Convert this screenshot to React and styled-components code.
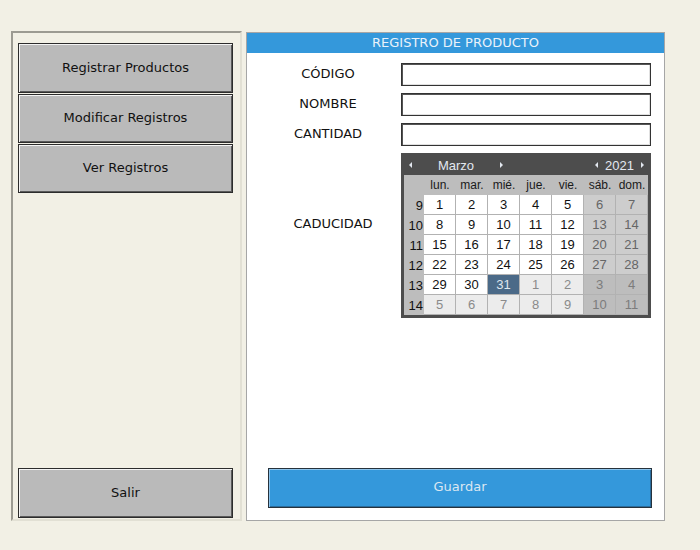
import React from "react";
import styled, { createGlobalStyle } from "styled-components";

const GlobalStyle = createGlobalStyle`
  html, body {
    margin: 0;
    padding: 0;
    background: #f2f0e5;
    font-family: "DejaVu Sans", sans-serif;
  }
`;

const Screen = styled.div`
  width: 700px;
  height: 550px;
  box-sizing: border-box;
  padding: 31px 0 0 11px;
  display: flex;
  align-items: flex-start;
  gap: 4px;
`;

const SideFrame = styled.div`
  box-sizing: border-box;
  width: 231px;
  height: 490px;
  border: 2px solid;
  border-color: #9c9b92 #e2e0d4 #e2e0d4 #9c9b92;
  padding: 10px 7px 1px 5px;
  display: flex;
  flex-direction: column;
  justify-content: space-between;
`;

const MenuGroup = styled.div`
  display: flex;
  flex-direction: column;
  gap: 1px;
`;

const MenuButton = styled.button`
  box-sizing: border-box;
  width: 215px;
  height: ${(p) => (p.$tall ? 50 : 49)}px;
  background: #bababa;
  border: 1px solid #2c2c2c;
  box-shadow: inset 1px 1px 0 #f4f4f4, inset -1px -1px 0 #5a5a5a;
  font-family: "DejaVu Sans", sans-serif;
  font-size: 13px;
  color: #111;
  padding: 0 0 2px;
`;

const Panel = styled.div`
  box-sizing: border-box;
  margin-top: 1px;
  width: 419px;
  height: 489px;
  background: #fff;
  border: 1px solid #a6a6a6;
  display: flex;
  flex-direction: column;
`;

const Title = styled.div`
  height: 20px;
  background: #3498db;
  color: #eaf2fa;
  font-size: 13px;
  line-height: 20px;
  text-align: center;
`;

const Form = styled.div`
  display: grid;
  grid-template-columns: 154px 250px;
  row-gap: 7px;
  padding-top: 10px;
`;

const Label = styled.div`
  font-size: 13px;
  color: #111;
  text-align: center;
  padding-left: ${(p) => p.$shift || 8}px;
  line-height: 21px;
  align-self: start;
  margin-top: ${(p) => p.$top || 0}px;
`;

const Entry = styled.input`
  box-sizing: border-box;
  width: 250px;
  height: 23px;
  border: 1px solid #333;
  box-shadow: inset 1px 1px 0 #555, inset -1px -1px 0 #e0e0e0;
  background: #fff;
  outline: none;
  margin: 0;
`;

const Calendar = styled.div`
  box-sizing: border-box;
  width: 250px;
  height: 165px;
  border: 3px solid #4d4d4d;
  background: #bdbdbd;
  font-family: "Liberation Sans", Arial, sans-serif;
`;

const CalHead = styled.div`
  height: 19px;
  background: #4d4d4d;
  color: #e3e8f0;
  display: flex;
  align-items: center;
  font-size: 13px;
  padding-bottom: 1px;
  box-sizing: border-box;
`;

const HeadPart = styled.div`
  display: flex;
  align-items: center;
  justify-content: space-between;
  width: ${(p) => p.$w}px;
  padding: 0 ${(p) => p.$pad}px;
  box-sizing: border-box;
`;

const Arrow = styled.span`
  width: 0;
  height: 0;
  border-top: 3px solid transparent;
  border-bottom: 3px solid transparent;
  ${(p) =>
    p.$dir === "left"
      ? "border-right: 3px solid #e3e8f0;"
      : "border-left: 3px solid #e3e8f0;"}
`;

const Grid = styled.div`
  display: grid;
  grid-template-columns: 20px repeat(7, 32px);
  grid-template-rows: 20px repeat(6, 20px);
`;

const DayName = styled.div`
  font-size: 12px;
  color: #1a1a1a;
  text-align: center;
  line-height: 20px;
`;

const WeekNo = styled.div`
  font-size: 13px;
  color: #111;
  text-align: right;
  padding-right: 1px;
  line-height: 21px;
`;

const cellColors = {
  day: ["#ffffff", "#111"],
  weekend: ["#cdcdcd", "#666"],
  other: ["#ececec", "#8a8a8a"],
  otherWeekend: ["#bdbdbd", "#7c7c7c"],
  selected: ["#4b6a88", "#dfe6ee"],
};

const Day = styled.div`
  box-sizing: border-box;
  background: ${(p) => cellColors[p.$kind][0]};
  color: ${(p) => cellColors[p.$kind][1]};
  border-right: 1px solid #b2b2b2;
  border-bottom: 1px solid #b2b2b2;
  font-size: 13px;
  text-align: center;
  line-height: 19px;
`;

const SaveButton = styled.button`
  box-sizing: border-box;
  margin: auto 12px 12px 21px;
  height: 40px;
  background: #3498db;
  border: 1px solid #27323c;
  box-shadow: inset 1px 1px 0 #8cc4ec, inset -1px -1px 0 #2a6c9c;
  color: #dbe7f2;
  font-family: "DejaVu Sans", sans-serif;
  font-size: 13px;
  padding: 0 0 4px;
`;

const dayNames = ["lun.", "mar.", "mié.", "jue.", "vie.", "sáb.", "dom."];

function buildWeeks() {
  const weeks = [];
  let day = 1;
  let next = 1;
  for (let w = 0; w < 6; w++) {
    const cells = [];
    for (let c = 0; c < 7; c++) {
      const weekend = c >= 5;
      if (day <= 31) {
        let kind = weekend ? "weekend" : "day";
        if (day === 31) kind = "selected";
        cells.push({ n: day, kind });
        day++;
      } else {
        cells.push({ n: next, kind: weekend ? "otherWeekend" : "other" });
        next++;
      }
    }
    weeks.push({ no: 9 + w, cells });
  }
  return weeks;
}

function DatePicker() {
  const weeks = buildWeeks();
  return (
    <Calendar>
      <CalHead>
        <HeadPart $w={104} $pad={5}>
          <Arrow $dir="left" />
          <span>Marzo</span>
          <Arrow $dir="right" />
        </HeadPart>
        <div style={{ flex: 1 }} />
        <HeadPart $w={57} $pad={4}>
          <Arrow $dir="left" />
          <span>2021</span>
          <Arrow $dir="right" />
        </HeadPart>
      </CalHead>
      <Grid>
        <div />
        {dayNames.map((d) => (
          <DayName key={d}>{d}</DayName>
        ))}
        {weeks.map((w) => (
          <React.Fragment key={w.no}>
            <WeekNo>{w.no}</WeekNo>
            {w.cells.map((c, i) => (
              <Day key={i} $kind={c.kind}>
                {c.n}
              </Day>
            ))}
          </React.Fragment>
        ))}
      </Grid>
    </Calendar>
  );
}

export default function App() {
  return (
    <>
      <GlobalStyle />
      <Screen>
        <SideFrame>
          <MenuGroup>
            <MenuButton $tall>Registrar Productos</MenuButton>
            <MenuButton>Modificar Registros</MenuButton>
            <MenuButton>Ver Registros</MenuButton>
          </MenuGroup>
          <MenuButton $tall>Salir</MenuButton>
        </SideFrame>
        <Panel>
          <Title>REGISTRO DE PRODUCTO</Title>
          <Form>
            <Label>CÓDIGO</Label>
            <Entry />
            <Label>NOMBRE</Label>
            <Entry />
            <Label>CANTIDAD</Label>
            <Entry />
            <Label $top={60} $shift={18}>CADUCIDAD</Label>
            <DatePicker />
          </Form>
          <SaveButton>Guardar</SaveButton>
        </Panel>
      </Screen>
    </>
  );
}
